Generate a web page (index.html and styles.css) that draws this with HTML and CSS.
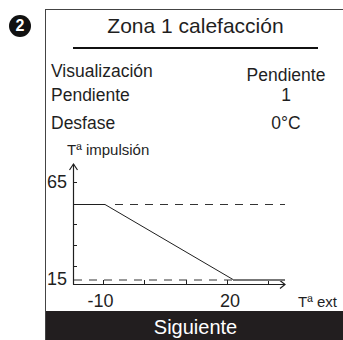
FILE: index.html
```html
<!DOCTYPE html>
<html>
    <head>
        <meta charset="UTF-8">
        <title>Zona 1 calefacción</title>
        <link rel="stylesheet" href="styles.css">
    </head>
    <body>
        <div class="page">
            <div class="badge">2</div>
            <section class="screen">
                <h1 class="title">Zona 1 calefacción</h1>
                <hr class="rule">
                <div class="row">
                    <span>Visualización</span><span class="value low">Pendiente</span>
                </div>
                <div class="row">
                    <span>Pendiente</span><span class="value">1</span>
                </div>
                <div class="row gap">
                    <span>Desfase</span><span class="value">0°C</span>
                </div>
                <!-- curva de calefacción -->
                <svg class="chart" width="299" height="178" viewBox="0 0 299 178">
                    <text class="axisTitle" x="21" y="22">Tª impulsión</text>
                    <g stroke="#1f1f1f" fill="none">
                        <line x1="27.5" y1="31" x2="27.5" y2="151.5" stroke-width="1.2"/>
                        <polyline points="23.5,37 27.5,31 31.5,37" stroke-width="1.2"/>
                        <line x1="27" y1="151.5" x2="239" y2="151.5" stroke-width="1.2"/>
                        <polyline points="234,147.5 239,151.5 234,155.5" stroke-width="1.2"/>
                        <!-- marcas eje Y -->
                        <line x1="27.5" y1="49.5" x2="31" y2="49.5"/>
                        <line x1="27.5" y1="91.5" x2="31" y2="91.5"/>
                        <line x1="27.5" y1="112.5" x2="31" y2="112.5"/>
                        <line x1="27.5" y1="133.5" x2="31" y2="133.5"/>
                        <!-- marcas eje X -->
                        <line x1="57.5" y1="151" x2="57.5" y2="147"/>
                        <line x1="98.5" y1="151" x2="98.5" y2="147"/>
                        <line x1="140.5" y1="151" x2="140.5" y2="147"/>
                        <line x1="181.5" y1="151" x2="181.5" y2="147"/>
                        <line x1="222.5" y1="151" x2="222.5" y2="147"/>
                        <!-- limites -->
                        <line x1="69" y1="71.5" x2="239" y2="71.5" stroke-dasharray="8 7" stroke="#333"/>
                        <line x1="28" y1="147" x2="187" y2="147" stroke-dasharray="8 7" stroke="#333"/>
                        <polyline points="27.5,71.5 59,71.5 187,146.5" stroke-width="1"/>
                        <line x1="187" y1="147" x2="239" y2="147" stroke="#777" stroke-width="2"/>
                    </g>
                    <text class="num" x="21" y="55" text-anchor="end">65</text>
                    <text class="num" x="21" y="152" text-anchor="end">15</text>
                    <text class="num" x="54.5" y="174" text-anchor="middle">-10</text>
                    <text class="num" x="184" y="174" text-anchor="middle">20</text>
                    <text class="axisTitle" x="252" y="174">Tª ext</text>
                </svg>
                <div class="bar">Siguiente</div>
            </section>
        </div>
    </body>
</html>
```
FILE: styles.css
```css
:root{
    --ink: #1f1f1f;
    --frame: #444;
}

body{
    margin: 0;
    overflow: hidden;
    background-color: white;
    color: var(--ink);
    font-family: "Liberation Sans", Arial, sans-serif;
}

.page{
    display: flex;
    align-items: flex-start;
    padding-top: 9px;
}

/* numero en circulo */
.badge{
    flex-shrink: 0;
    width: 22px;
    height: 22px;
    margin: 6px 14px 0 9px;
    border-radius: 50%;
    background-color: #111;
    color: white;
    font-size: 16px;
    font-weight: bold;
    line-height: 22px;
    text-align: center;
}

/*------------pantalla----------------*/
.screen{
    flex-shrink: 0;
    width: 299px;
    height: 331px;
    border-top: 1px solid var(--frame);
    border-left: 1px solid var(--frame);
}

.title{
    margin: 0;
    padding-top: 4px;
    font-size: 21px;
    font-weight: normal;
    line-height: 24px;
    text-align: center;
}

.rule{
    width: 245px;
    height: 2px;
    margin: 9px 0 0 27px;
    border: none;
    background-color: #111;
}

.row{
    display: grid;
    grid-template-columns: 1fr 100px;
    align-items: start;
    padding: 0 9px 0 5px;
    font-size: 17.5px;
    line-height: 20px;
}
.rule + .row{margin-top: 12px;}
.row.gap{margin-top: 8px;}
.value{text-align: center;}
.value.low{padding-top: 4px;}

.chart{display: block;}
.chart text{
    fill: var(--ink);
    font-family: "Liberation Sans", Arial, sans-serif;
}
.axisTitle{font-size: 15px;}
.num{font-size: 18px;}

.bar{
    height: 27px;
    padding-top: 3px;
    background-color: #221e1f;
    color: white;
    font-size: 20px;
    line-height: 27px;
    text-align: center;
}
```
